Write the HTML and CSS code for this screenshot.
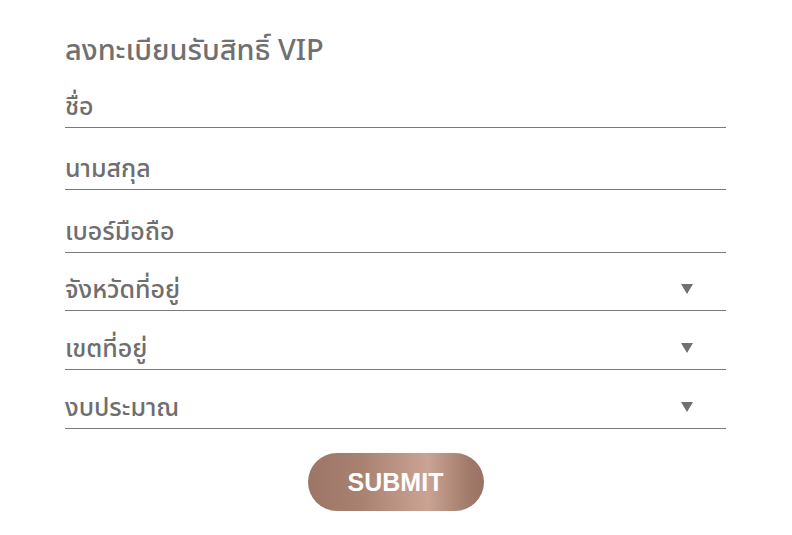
FILE: index.html
```
<!DOCTYPE html>
<html lang="th">
<head>
<meta charset="utf-8">
<link rel="stylesheet" href="styles.css">
</head>
<body>
<form class="vip-form">
  <h2 class="title">ลงทะเบียนรับสิทธิ์ VIP</h2>
  <div class="field field-input field-first"><span class="label">ชื่อ</span></div>
  <div class="field field-input"><span class="label">นามสกุล</span></div>
  <div class="field field-input field-tall"><span class="label">เบอร์มือถือ</span></div>
  <div class="field field-select"><span class="label">จังหวัดที่อยู่</span><span class="arrow"></span></div>
  <div class="field field-select"><span class="label">เขตที่อยู่</span><span class="arrow"></span></div>
  <div class="field field-select"><span class="label">งบประมาณ</span><span class="arrow"></span></div>
  <div class="actions"><button type="button" class="submit">SUBMIT</button></div>
</form>
</body>
</html>
```
FILE: styles.css
```
html, body {
  margin: 0;
  padding: 0;
  background: #ffffff;
}
body {
  font-family: "Noto Sans", "Noto Sans Thai", "Liberation Sans", sans-serif;
  color: #6e6e6e;
}
.vip-form {
  width: 661px;
  margin: 0 0 0 65px;
  padding-top: 31px;
}
.title {
  margin: 0;
  font-size: 29px;
  font-weight: 500;
  line-height: 36px;
  height: 36px;
  color: #707070;
}
.field {
  display: flex;
  align-items: flex-end;
  justify-content: space-between;
  border-bottom: 1px solid #7a7a7a;
  box-sizing: border-box;
  padding-bottom: 7px;
}
.field-input { height: 62px; }
.field-first { height: 61px; }
.field-tall { height: 63px; }
.field-select { height: 58px; }
.field-select + .field-select { height: 59px; }
.label {
  font-size: 25px;
  font-weight: 500;
  line-height: 30px;
  color: #6e6e6e;
}
.arrow {
  width: 0;
  height: 0;
  border-left: 6px solid transparent;
  border-right: 6px solid transparent;
  border-top: 10px solid #707070;
  margin-right: 33px;
  margin-bottom: 9px;
}
.actions {
  display: flex;
  justify-content: center;
  padding-top: 24px;
}
.submit {
  width: 176px;
  height: 58px;
  border: none;
  border-radius: 29px;
  background: linear-gradient(90deg, #9c7566 0%, #a98171 30%, #c69e8e 62%, #c9a393 68%, #a17969 92%, #9a7263 100%);
  color: #ffffff;
  font-family: "Liberation Sans", Arial, sans-serif;
  font-weight: bold;
  font-size: 25px;
  letter-spacing: 0;
  padding: 0;
}
```
